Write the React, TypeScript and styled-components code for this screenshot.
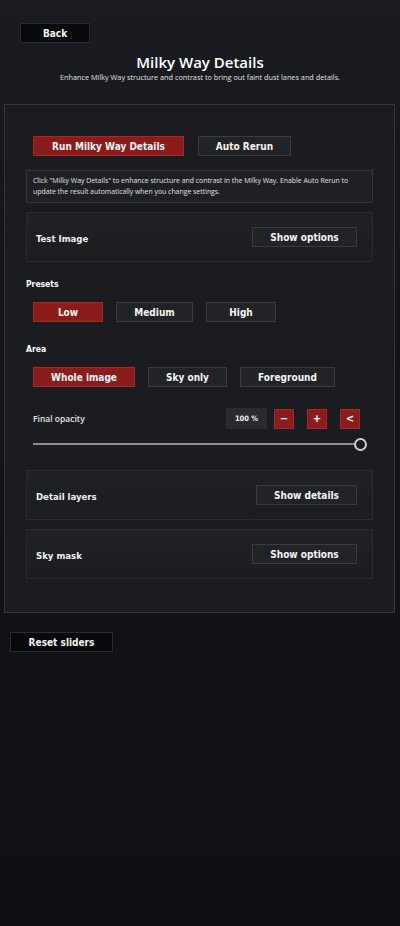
import styled, { createGlobalStyle } from 'styled-components';

const GlobalStyle = createGlobalStyle`
  html, body {
    margin: 0;
    padding: 0;
    background: #101115;
  }
  body {
    font-family: "DejaVu Sans", Verdana, sans-serif;
    color: #f2f2f2;
  }
`;

const Page = styled.div`
  min-height: 926px;
  box-sizing: border-box;
  padding-top: 23px;
  background: linear-gradient(180deg, #1a1c21 0%, #131418 35%, #0f1013 100%);
`;

const Btn = styled.button<{ $active?: boolean; $w: number; $dark?: boolean }>`
  width: ${(p) => p.$w}px;
  height: 20px;
  box-sizing: border-box;
  padding: 0;
  border: 1px solid ${(p) => (p.$active ? '#a12a2a' : p.$dark ? '#2a2b2f' : '#3a3b40')};
  background: ${(p) => (p.$active ? '#8a1c1c' : p.$dark ? '#08090b' : '#222327')};
  color: #f4f4f4;
  font-family: "DejaVu Sans Condensed", "DejaVu Sans", Verdana, sans-serif;
  font-weight: bold;
  font-size: 10px;
  cursor: pointer;
  display: flex;
  align-items: center;
  justify-content: center;
`;

const BackRow = styled.div`
  padding-left: 20px;
`;

const Header = styled.header`
  text-align: center;
  margin-top: 9px;
`;

const Title = styled.h1`
  margin: 0;
  font-family: "Open Sans", "Noto Sans", sans-serif;
  font-size: 15px;
  font-weight: 600;
  line-height: 20px;
  color: #ffffff;
`;

const Subtitle = styled.p`
  margin: 0;
  font-family: "Open Sans", "Noto Sans", sans-serif;
  font-size: 7.3px;
  line-height: 10px;
  color: #e0e0e0;
`;

const Panel = styled.section`
  margin: 22px 5px 0 4px;
  border: 1px solid #36383c;
  background: #1b1c20;
  padding: 31px 21px 33px 21px;
`;

const ButtonRow = styled.div<{ $gap: number }>`
  display: flex;
  gap: ${(p) => p.$gap}px;
  padding-left: 7px;
`;

const Info = styled.div`
  margin-top: 14px;
  border: 1px solid #35363a;
  background: #1f2024;
  padding: 4px 6px 5px 6px;
  font-family: "Open Sans", "Noto Sans", sans-serif;
  font-size: 6.9px;
  line-height: 11px;
  color: #e0e0e0;
`;

const Card = styled.div<{ $top: number }>`
  margin-top: ${(p) => p.$top}px;
  height: 50px;
  box-sizing: border-box;
  border: 1px solid #2b2c30;
  background: linear-gradient(180deg, #202125 0%, #1c1d21 100%);
  display: flex;
  align-items: center;
  justify-content: space-between;
  padding: 0 15px 0 9px;
`;

const CardLabel = styled.span`
  font-family: "DejaVu Sans Condensed", "DejaVu Sans", Verdana, sans-serif;
  font-weight: bold;
  font-size: 9.5px;
  color: #f0f0f0;
  margin-top: 3px;
`;

const SectionLabel = styled.div<{ $top: number }>`
  margin-top: ${(p) => p.$top}px;
  margin-bottom: 13px;
  font-family: "DejaVu Sans Condensed", "DejaVu Sans", Verdana, sans-serif;
  font-weight: bold;
  font-size: 8.5px;
  line-height: 10px;
  color: #ffffff;
`;

const OpacityRow = styled.div`
  margin-top: 21px;
  display: flex;
  align-items: center;
  padding-left: 7px;
  padding-right: 13px;
`;

const OpacityLabel = styled.span`
  flex: 1;
  font-family: "Open Sans", "Noto Sans", sans-serif;
  font-weight: 600;
  font-size: 8.5px;
  color: #e6e6e6;
`;

const ValueBox = styled.div`
  width: 41px;
  height: 21px;
  background: #2a2b2f;
  display: flex;
  align-items: center;
  justify-content: center;
  font-family: "DejaVu Sans Condensed", "DejaVu Sans", Verdana, sans-serif;
  font-weight: bold;
  font-size: 7.5px;
  color: #eeeeee;
  margin-right: 7px;
`;

const StepBtn = styled.button`
  width: 20px;
  height: 20px;
  padding: 0;
  border: 1px solid #a32929;
  background: #8a1c1c;
  color: #ffffff;
  font-family: "DejaVu Sans", Verdana, sans-serif;
  font-weight: bold;
  font-size: 10px;
  display: flex;
  align-items: center;
  justify-content: center;
  & + & {
    margin-left: 13px;
  }
`;

const SliderWrap = styled.div`
  margin-top: 8px;
  padding-left: 7px;
  padding-right: 6px;
  height: 14px;
  display: flex;
  align-items: center;
`;

const Track = styled.div`
  flex: 1;
  height: 2px;
  background: #8c8d90;
`;

const Thumb = styled.div`
  width: 13px;
  height: 13px;
  box-sizing: border-box;
  border-radius: 50%;
  border: 2px solid #d0d0d0;
  background: #1b1c20;
  flex-shrink: 0;
`;

const ResetRow = styled.div`
  margin-top: 19px;
  padding-left: 10px;
`;

export default function App() {
  return (
    <>
      <GlobalStyle />
      <Page>
        <BackRow>
          <Btn $w={70} $dark>Back</Btn>
        </BackRow>
        <Header>
          <Title>Milky Way Details</Title>
          <Subtitle>Enhance Milky Way structure and contrast to bring out faint dust lanes and details.</Subtitle>
        </Header>
        <Panel>
          <ButtonRow $gap={14}>
            <Btn $w={151} $active>Run Milky Way Details</Btn>
            <Btn $w={93}>Auto Rerun</Btn>
          </ButtonRow>
          <Info>
            Click "Milky Way Details" to enhance structure and contrast in the Milky Way. Enable Auto Rerun to
            update the result automatically when you change settings.
          </Info>
          <Card $top={9}>
            <CardLabel>Test Image</CardLabel>
            <Btn $w={105}>Show options</Btn>
          </Card>
          <SectionLabel $top={17}>Presets</SectionLabel>
          <ButtonRow $gap={13}>
            <Btn $w={70} $active>Low</Btn>
            <Btn $w={77}>Medium</Btn>
            <Btn $w={70}>High</Btn>
          </ButtonRow>
          <SectionLabel $top={22}>Area</SectionLabel>
          <ButtonRow $gap={13}>
            <Btn $w={102} $active>Whole image</Btn>
            <Btn $w={79}>Sky only</Btn>
            <Btn $w={95}>Foreground</Btn>
          </ButtonRow>
          <OpacityRow>
            <OpacityLabel>Final opacity</OpacityLabel>
            <ValueBox>100 %</ValueBox>
            <StepBtn>−</StepBtn>
            <StepBtn>+</StepBtn>
            <StepBtn>&lt;</StepBtn>
          </OpacityRow>
          <SliderWrap>
            <Track />
            <Thumb />
          </SliderWrap>
          <Card $top={19}>
            <CardLabel>Detail layers</CardLabel>
            <Btn $w={101}>Show details</Btn>
          </Card>
          <Card $top={9}>
            <CardLabel>Sky mask</CardLabel>
            <Btn $w={105}>Show options</Btn>
          </Card>
        </Panel>
        <ResetRow>
          <Btn $w={103} $dark>Reset sliders</Btn>
        </ResetRow>
      </Page>
    </>
  );
}
